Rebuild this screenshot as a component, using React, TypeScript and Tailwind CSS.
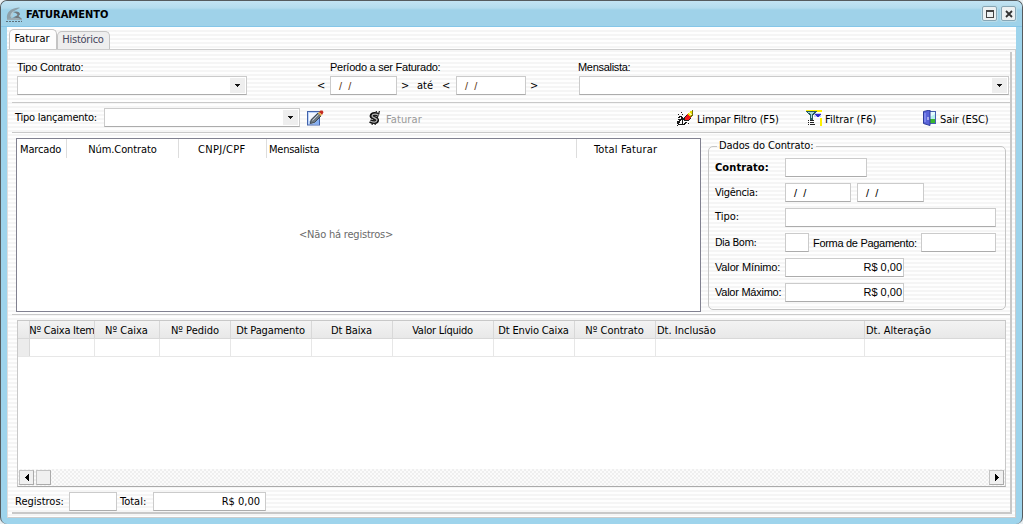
import type { ReactNode } from "react";

const tahoma = "font-['DejaVu_Sans_Condensed','DejaVu_Sans',sans-serif]";
const msSans = "font-['Liberation_Sans',Arial,sans-serif]";
const stripes = "bg-[repeating-linear-gradient(180deg,#fefefe_0px,#fefefe_2px,#f5f5f5_2px,#f5f5f5_4px)]";

function Text({ className = "", ms = false, children }: { className?: string; ms?: boolean; children?: ReactNode }) {
  return (
    <span className={`block shrink-0 whitespace-pre text-[11px] leading-[14px] ${ms ? msSans : tahoma} ${className}`}>
      {children}
    </span>
  );
}

function Field({ className = "", children }: { className?: string; children?: ReactNode }) {
  return (
    <div className={`flex h-[19px] shrink-0 items-center border border-[#cbcbcb] border-b-[#acacac] bg-white ${className}`}>
      {children}
    </div>
  );
}

function Combo({ className = "" }: { className?: string }) {
  return (
    <Field className={`justify-end pr-px ${className}`}>
      <div className="flex h-[15px] w-[15px] items-center justify-center bg-[#eeeeee]">
        <svg width="5" height="3" viewBox="0 0 5 3" shapeRendering="crispEdges">
          <path d="M0 0h5v1H4v1H3v1H2V2H1V1H0z" fill="#111" />
        </svg>
      </div>
    </Field>
  );
}

function Slashes({ className = "" }: { className?: string }) {
  return <Text ms className={className}>/&nbsp;&nbsp;/</Text>;
}

function LogoIcon() {
  return (
    <svg width="17" height="16" viewBox="0 0 17 16">
      <path d="M1 12C0 6 4 1 13 .5l1 .5C9 3 5 6 5.500 9L5 12z" fill="#8ea0a9" />
      <path d="M4.500 10c-.5-2.500 1-5 4-6.500C7 5.500 6.500 7 7 9z" fill="#b3cbd5" />
      <path d="M7 5c4-1.500 7 0 7 2.500L12.500 9l3.500 3v1.500c-3-2.500-6-3-10-2.500l5-2.500C12.500 7.500 10 6 7 5z" fill="#72797e" />
      <path d="M1 12c4-1.500 10-1.500 15 0v1H1z" fill="#9aabb3" />
      <path d="M0 14.500h16" stroke="#5d707a" strokeDasharray="2 1" />
    </svg>
  );
}

function EditIcon() {
  return (
    <svg width="17" height="16" viewBox="0 0 17 16">
      <rect x=".5" y="1.500" width="12" height="13.500" fill="#bcd4fa" stroke="#4263ab" />
      <path d="M2 3h8L3 11H2z" fill="#f4f8ff" />
      <path d="M6 14.500l6-6v6z" fill="#86aff0" />
      <path d="M3.200 13.500l1-4L11 3l3 3-6.500 6.500z" fill="#6f7a84" stroke="#2b333b" strokeWidth=".8" />
      <path d="M5.500 10.500l6-6" stroke="#c3cbd1" />
      <path d="M12 2L13.500 .5h2l1 1.800L15 5z" fill="#c52b20" />
      <path d="M10.800 3l1.200-1 3 3-1.200 1z" fill="#e9b84b" />
    </svg>
  );
}

function DollarIcon() {
  return (
    <svg width="13" height="14" viewBox="0 0 13 14">
      <path d="M10.500 4.200C8.500 2.500 4 2.500 3.500 4.800S9.500 6.800 9.200 9.200s-4.200 2.300-7.200 .8" fill="none" stroke="#111" strokeWidth="3.800" />
      <path d="M8.500 0L4 14M11.500 0L7 14" stroke="#222" strokeWidth="1.200" />
      <path d="M10.500 4.200C8.500 2.800 4.500 2.800 4 4.800S9.500 6.800 9 9.200s-4 2.200-7 .8" fill="none" stroke="#b5b5b5" strokeWidth="1.300" />
    </svg>
  );
}

function EraserIcon() {
  return (
    <svg width="17" height="16" viewBox="0 0 17 16" shapeRendering="crispEdges">
      <path d="M11 3l5-3v5l-4 4-4-2z" fill="#e8df00" />
      <path d="M15 0h1v5l-4 4v-2l3-3z" fill="#77710b" />
      <path d="M12 2h1v1h1v1h1v1h-2V4h-1z" fill="#fff799" />
      <path d="M7 7l3-3 4 4-3 3H8z" fill="#f01818" />
      <path d="M6 8h1V7h1V6h1V5h1v1H9v1H8v3h3v1H7v-1H6zM12 9h1V8h1v1h-1v1h-1v1h-1v-1h1z" fill="#222" />
      <path d="M2 6h3v1H2zM1 7h2v1H1zM4 7h2v2H4zM1 9h4v1H1zM0 11h2v-1h2v1H3v2H2v1h3v-1h1v2H1v-1H0zM5 9h1v4H5zM8 12h2v1H9v1H8v1H6v-1h1v-1h1zM4 2h1v1H4zM1 4h1v1H1zM11 13h1v1h-1zM5 4h1v1H5zM0 15h1v1H0z" fill="#171717" />
    </svg>
  );
}

function FilterIcon() {
  return (
    <svg width="17" height="16" viewBox="0 0 17 16" shapeRendering="crispEdges">
      <path d="M11 0h5v2h-5zM0 0h11v1H0zM14 8h2v8h-2z" fill="#fff000" />
      <path d="M8 3h7v4H8z" fill="#c7d1e7" />
      <path d="M9 4h6v1h-1v1h-1v1h-2V6h-1V5H9z" fill="#3029cf" />
      <path d="M0 1h11v1h-1v1H9v1H8v1H7v5H4V5H3V4H2V3H1V2H0z" fill="#285b5d" />
      <path d="M2 2h6v1H7v1H6v4H5V4H4V3H2z" fill="#a8dadd" />
      <path d="M2 10h1v1H2zM4 10h4v1H4zM2 12h1v1H2zM4 12h4v1H4zM2 14h1v1H2zM4 14h5v1H4z" fill="#222" />
    </svg>
  );
}

function DoorIcon() {
  return (
    <svg width="13" height="16" viewBox="0 0 13 16">
      <rect x="5.500" y="1.500" width="7" height="12" fill="#e5fbff" stroke="#4360ae" />
      <path d="M7 9h5v4H7z" fill="#38b62e" />
      <path d="M7 7l5-3v5H7z" fill="#b9f2ef" />
      <path d="M.5 1.500L7 0v15.500L.5 13.500z" fill="#5963d9" stroke="#2e3c9b" />
      <path d="M2 3v9" stroke="#8992f0" strokeWidth="1.500" />
      <path d="M5 7v3" stroke="#f3f3ff" />
    </svg>
  );
}

function WindowButton({ children }: { children: ReactNode }) {
  return (
    <div className="flex h-[15px] w-[15px] items-center justify-center rounded-[2px] border border-[#87a6b5] bg-[#edf1f2] shadow-[0_0_0_1px_#b9dce9]">
      {children}
    </div>
  );
}

function ScrollButton({ children }: { children?: ReactNode }) {
  return (
    <div className="flex h-[15px] w-[15px] items-center justify-center border border-[#c3c3c3] border-r-[#aaa] border-b-[#aaa] bg-[#f0f0f0]">
      {children}
    </div>
  );
}

const columns = [
  { label: "Nº Caixa Item", cell: "w-[65px] justify-center", text: "tracking-[-0.25px]" },
  { label: "Nº Caixa", cell: "w-[65px] justify-center pr-px", text: "" },
  { label: "Nº Pedido", cell: "w-[71px] justify-center", text: "" },
  { label: "Dt Pagamento", cell: "w-[81px] justify-center pr-px", text: "tracking-[-0.15px]" },
  { label: "Dt Baixa", cell: "w-[81px] justify-center pr-px", text: "tracking-[-0.15px]" },
  { label: "Valor Líquido", cell: "w-[101px] justify-center pr-px", text: "tracking-[-0.25px]" },
  { label: "Dt Envio Caixa", cell: "w-[81px] justify-center pr-px", text: "tracking-[-0.15px]" },
  { label: "Nº Contrato", cell: "w-[81px] justify-center pr-px", text: "" },
  { label: "Dt. Inclusão", cell: "w-[209px] pl-px", text: "" },
  { label: "Dt. Alteração", cell: "w-[140px] pl-px", text: "" },
];

function TitleBar() {
  return (
    <div className="flex h-[26px] shrink-0 items-start border-b border-[#85c6e8] bg-[linear-gradient(180deg,#c3e3f2_0px,#b4dcee_7px,#9fd2e9_9px,#9fd2e9_100%)] pl-[5px]">
      <div className="mt-[6px]"><LogoIcon /></div>
      <Text className="mt-[7px] ml-[3px] flex-1 font-bold text-black">FATURAMENTO</Text>
      <div className="mt-[5px] mr-[6px] flex gap-1">
        <WindowButton>
          <svg width="8" height="8" viewBox="0 0 8 8" shapeRendering="crispEdges">
            <path d="M0 0h8v8H0zM1 2v5h6V2z" fill="#444" fillRule="evenodd" />
          </svg>
        </WindowButton>
        <WindowButton>
          <svg width="8" height="8" viewBox="0 0 8 8"><path d="M1 1l6 6M7 1L1 7" stroke="#333" strokeWidth="1.800" /></svg>
        </WindowButton>
      </div>
    </div>
  );
}

function Tabs() {
  return (
    <div className="flex h-[21px] shrink-0 items-end pl-[2px]">
      <div className="-mb-px flex h-[21px] w-[48px] justify-center rounded-t-[5px] border border-b-0 border-[#c4c4c4] bg-[#fdfdfd] pt-[2px] pr-[2px]">
        <Text className="text-black">Faturar</Text>
      </div>
      <div className="flex h-[18px] w-[53px] justify-center rounded-t-[5px] border border-b-0 border-[#c4c4c4] bg-[#eeeeee] pt-px pr-px">
        <Text className="tracking-[-0.25px] text-[#45455c]">Histórico</Text>
      </div>
    </div>
  );
}

function FilterPanel() {
  return (
    <div className="flex h-[51px] shrink-0 border-b border-[#c9c9c9] pl-[5px]">
      <div className="w-[313px]">
        <Text ms className="mt-[8px] h-[16px] tracking-[-0.22px]">Tipo Contrato:</Text>
        <Combo className="w-[230px]" />
      </div>
      <div className="w-[249px]">
        <Text ms className="mt-[8px] h-[16px] tracking-[-0.25px]">Período a ser Faturado:</Text>
        <div className="-ml-[13px] flex items-center">
          <Text className="w-[13px]">&lt;</Text>
          <Field className="w-[67px] pl-2"><Slashes className="text-[#603a20]" /></Field>
          <Text className="ml-1 w-4">&gt;</Text>
          <Text className="w-[25px]">até</Text>
          <Text className="w-[14px]">&lt;</Text>
          <Field className="w-[70px] pl-2"><Slashes className="text-[#603a20]" /></Field>
          <Text className="ml-1">&gt;</Text>
        </div>
      </div>
      <div className="w-[430px]">
        <Text ms className="-ml-px mt-[8px] h-[16px] tracking-[-0.3px]">Mensalista:</Text>
        <Combo className="w-[430px]" />
      </div>
    </div>
  );
}

function Toolbar() {
  return (
    <div className="flex h-[30px] shrink-0 border-b border-[#c9c9c9] pt-[5px] pl-[3px]">
      <Text className="mt-[3px] w-[89px] tracking-[-0.25px]">Tipo lançamento:</Text>
      <Combo className="w-[196px]" />
      <div className="mt-[2px] ml-[7px] w-[61px]"><EditIcon /></div>
      <div className="mt-[3px] w-[18px]"><DollarIcon /></div>
      <Text className="mt-[5px] w-[291px] tracking-[0.1px] text-[#999999]">Faturar</Text>
      <div className="mt-[2px] w-5"><EraserIcon /></div>
      <Text className="mt-[5px] w-[109px] tracking-[-0.15px]">Limpar Filtro (F5)</Text>
      <div className="mt-[2px] w-[19px]"><FilterIcon /></div>
      <Text className="mt-[5px] w-[98px]">Filtrar (F6)</Text>
      <div className="mt-[2px] w-[17px]"><DoorIcon /></div>
      <Text className="mt-[5px] tracking-[-0.1px]">Sair (ESC)</Text>
    </div>
  );
}

function Records() {
  return (
    <div className="mt-[5px] ml-1 flex h-[174px] w-[685px] shrink-0 flex-col border border-[#818190] bg-white">
      <div className="flex h-[19px] shrink-0">
        <div className="w-[50px] border-r border-[#dddddd] pt-1 pl-[3px]"><Text className="tracking-[-0.15px]">Marcado</Text></div>
        <div className="flex w-[112px] justify-center border-r border-[#dddddd] pt-1"><Text className="tracking-[-0.1px]">Núm.Contrato</Text></div>
        <div className="w-[88px] border-r border-[#dddddd] pt-1 pl-[19px]"><Text className="tracking-[0.3px]">CNPJ/CPF</Text></div>
        <div className="w-[310px] border-r border-[#dddddd] pt-1 pl-[2px]"><Text className="tracking-[-0.25px]">Mensalista</Text></div>
        <div className="w-[98px] pt-1 pl-[17px]"><Text className="tracking-[0.15px]">Total Faturar</Text></div>
      </div>
      <div className="flex pt-[70px] pl-[282px]"><Text className="tracking-[-0.2px] text-[#6a6a6a]">&lt;Não há registros&gt;</Text></div>
    </div>
  );
}

function ContractData() {
  return (
    <fieldset className="mt-[6px] ml-[7px] h-[171px] w-[298px] min-w-0 shrink-0 rounded-[5px] border border-[#c5c5c5] pl-[6px]">
      <legend className="ml-[2px] px-[2px]"><Text className="h-[14px] tracking-[-0.1px]">Dados do Contrato:</Text></legend>
      <div className="mt-[5px] flex flex-col gap-[6px]">
        <div className="flex items-center"><Text className="w-[70px] font-bold tracking-[0.1px]">Contrato:</Text><Field className="w-[82px]" /></div>
        <div className="flex items-center">
          <Text className="w-[70px] tracking-[-0.3px]">Vigência:</Text>
          <Field className="w-[66px] pl-2"><Slashes /></Field>
          <Field className="ml-[6px] w-[67px] pl-2"><Slashes /></Field>
        </div>
        <div className="flex items-center"><Text className="-mt-[2px] w-[70px]">Tipo:</Text><Field className="w-[211px]" /></div>
        <div className="flex items-center">
          <Text className="w-[70px] tracking-[-0.5px]">Dia Bom:</Text><Field className="w-6" />
          <Text ms className="ml-1 w-[108px] tracking-[-0.3px]">Forma de Pagamento:</Text><Field className="w-[75px]" />
        </div>
        <div className="flex items-center"><Text ms className="-mt-[2px] w-[70px] tracking-[-0.15px]">Valor Mínimo:</Text><Field className="w-[119px] justify-end pr-px"><Text ms className="-mt-[2px]">R$ 0,00</Text></Field></div>
        <div className="flex items-center"><Text ms className="-mt-[2px] w-[70px] tracking-[-0.25px]">Valor Máximo:</Text><Field className="w-[119px] justify-end pr-px"><Text ms className="-mt-[2px]">R$ 0,00</Text></Field></div>
      </div>
    </fieldset>
  );
}

function DetailGrid() {
  return (
    <div className="mt-[5px] ml-[5px] flex h-[167px] w-[989px] shrink-0 flex-col border border-[#c8c8c8] border-b-[#aaa] bg-white">
      <div className="flex h-[18px] shrink-0 border-b border-[#d8d8d8] bg-[linear-gradient(180deg,#f3f3f3,#e8e8e8)]">
        <div className="w-[12px] shrink-0 border-r border-[#d8d8d8]" />
        {columns.map((column) => (
          <div key={column.label} className={`flex shrink-0 overflow-hidden border-r border-[#d8d8d8] pt-[3px] last:border-r-0 ${column.cell}`}>
            <Text className={column.text}>{column.label}</Text>
          </div>
        ))}
      </div>
      <div className="flex h-[18px] shrink-0 border-b border-[#e7e7e7]">
        <div className="w-[12px] shrink-0 border-r border-[#d8d8d8] bg-[#ececec]" />
        {columns.map((column) => (
          <div key={column.label} className={`shrink-0 border-r border-[#e7e7e7] last:border-r-0 ${column.cell}`} />
        ))}
      </div>
      <div className="flex-1" />
      <div className="flex h-[17px] shrink-0 items-center gap-[2px] bg-[#f7f7f7] bg-[repeating-conic-gradient(#efefef_0deg_90deg,#fbfbfb_90deg_180deg)] bg-[length:4px_4px] px-px">
        <ScrollButton>
          <svg width="4" height="7" viewBox="0 0 4 7" shapeRendering="crispEdges"><path d="M4 0v7L0 3.500z" fill="#000" /></svg>
        </ScrollButton>
        <ScrollButton />
        <div className="flex-1" />
        <ScrollButton>
          <svg width="4" height="7" viewBox="0 0 4 7" shapeRendering="crispEdges"><path d="M0 0v7L4 3.500z" fill="#000" /></svg>
        </ScrollButton>
      </div>
    </div>
  );
}

export default function App() {
  return (
    <div className="h-[524px] w-[1023px] overflow-hidden bg-[#e8eff2] text-black">
      <div className="flex h-[524px] w-[1023px] flex-col overflow-hidden rounded-[7px] border border-b-0 border-[#565b5e] bg-[#9ed4ec]">
        <TitleBar />
        <div className={`mx-[6px] flex h-[491px] shrink-0 flex-col border-t border-white ${stripes}`}>
          <Tabs />
          <div className="flex h-[469px] flex-col border border-[#cccccc] border-l-[#dddddd] pt-[2px]">
            <div className="ml-1 flex h-[462px] w-[1000px] flex-col border-r-2 border-b-2 border-[#c8c8c8]">
              <FilterPanel />
              <Toolbar />
              <div className="flex h-[182px] shrink-0 border-b border-[#c9c9c9]">
                <Records />
                <ContractData />
              </div>
              <DetailGrid />
              <div className="mt-[5px] flex items-center pl-[3px]">
                <Text className="w-[54px]">Registros:</Text>
                <Field className="w-[48px]" />
                <Text className="ml-[3px] w-[33px]">Total:</Text>
                <Field className="w-[113px] justify-end pr-[5px]"><Text>R$ 0,00</Text></Field>
              </div>
            </div>
          </div>
        </div>
      </div>
    </div>
  );
}
